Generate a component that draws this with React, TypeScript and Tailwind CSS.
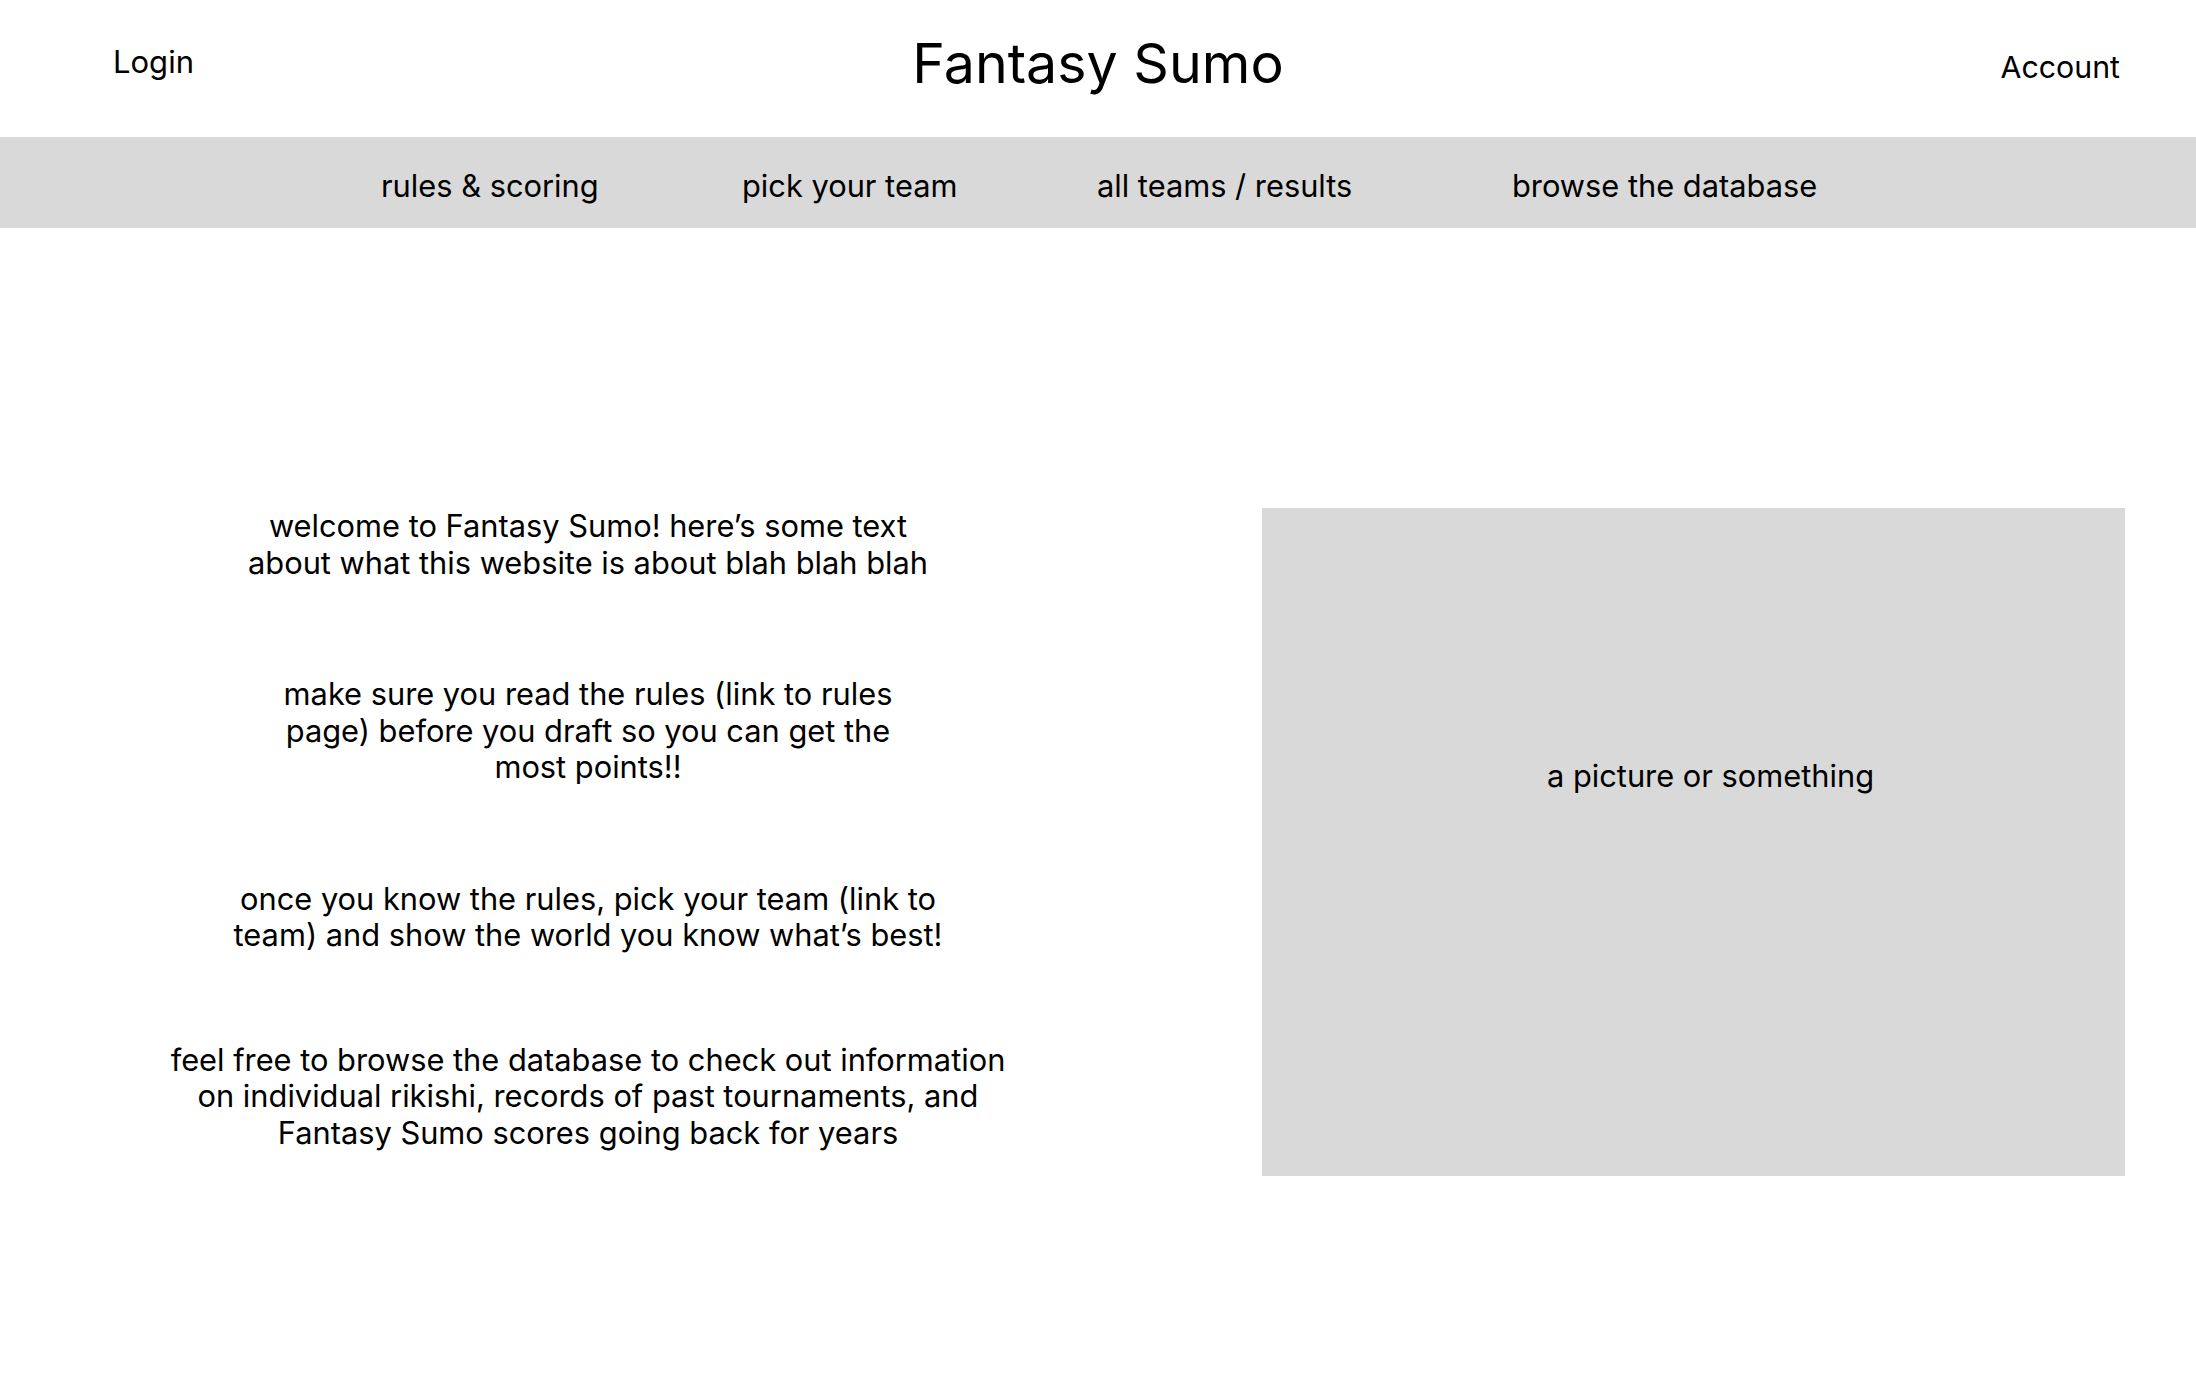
export default function App() {
  const navItems = [
    { label: "rules & scoring", w: "w-[361px]" },
    { label: "pick your team", w: "w-[355px]" },
    { label: "all teams / results", w: "w-[415px]" },
    { label: "browse the database", w: "w-auto" },
  ];
  return (
    <div
      className="min-h-[1378px] w-[2196px] bg-white text-black"
      style={{ fontFamily: "Inter, 'Noto Sans', sans-serif" }}
    >
      <header className="grid h-[137px] grid-cols-[1fr_auto_1fr]">
        <div className="pl-[113px] pt-[44px] text-[31px] leading-[36px]">Login</div>
        <div className="pt-[29px] text-[55.5px] leading-[68px]">Fantasy Sumo</div>
        <div className="pr-[76px] pt-[49px] text-right text-[30.3px] leading-[36px]">Account</div>
      </header>
      <nav className="flex h-[91px] items-start bg-[#d9d9d9] pl-[381px] pt-[31px]">
        {navItems.map((n) => (
          <span key={n.label} className={`${n.w} shrink-0 text-[30.8px] leading-[36px]`}>
            {n.label}
          </span>
        ))}
      </nav>
      <main className="flex items-start pt-[280px]">
        <div className="flex w-[1176px] flex-col items-center text-center text-[30.8px] leading-[36.5px]">
          <p>
            welcome to Fantasy Sumo! here’s some text
            <br />
            about what this website is about blah blah blah
          </p>
          <p className="mt-[95px]">
            make sure you read the rules (link to rules
            <br />
            page) before you draft so you can get the
            <br />
            most points!!
          </p>
          <p className="mt-[95px]">
            once you know the rules, pick your team (link to
            <br />
            team) and show the world you know what’s best!
          </p>
          <p className="mt-[88px]">
            feel free to browse the database to check out information
            <br />
            on individual rikishi, records of past tournaments, and
            <br />
            Fantasy Sumo scores going back for years
          </p>
        </div>
        <div className="ml-[86px] flex h-[668px] w-[863px] flex-col items-center bg-[#d9d9d9] pl-[34px] pt-[250px]">
          <span className="text-[30.8px] leading-[36px]">a picture or something</span>
        </div>
      </main>
    </div>
  );
}
